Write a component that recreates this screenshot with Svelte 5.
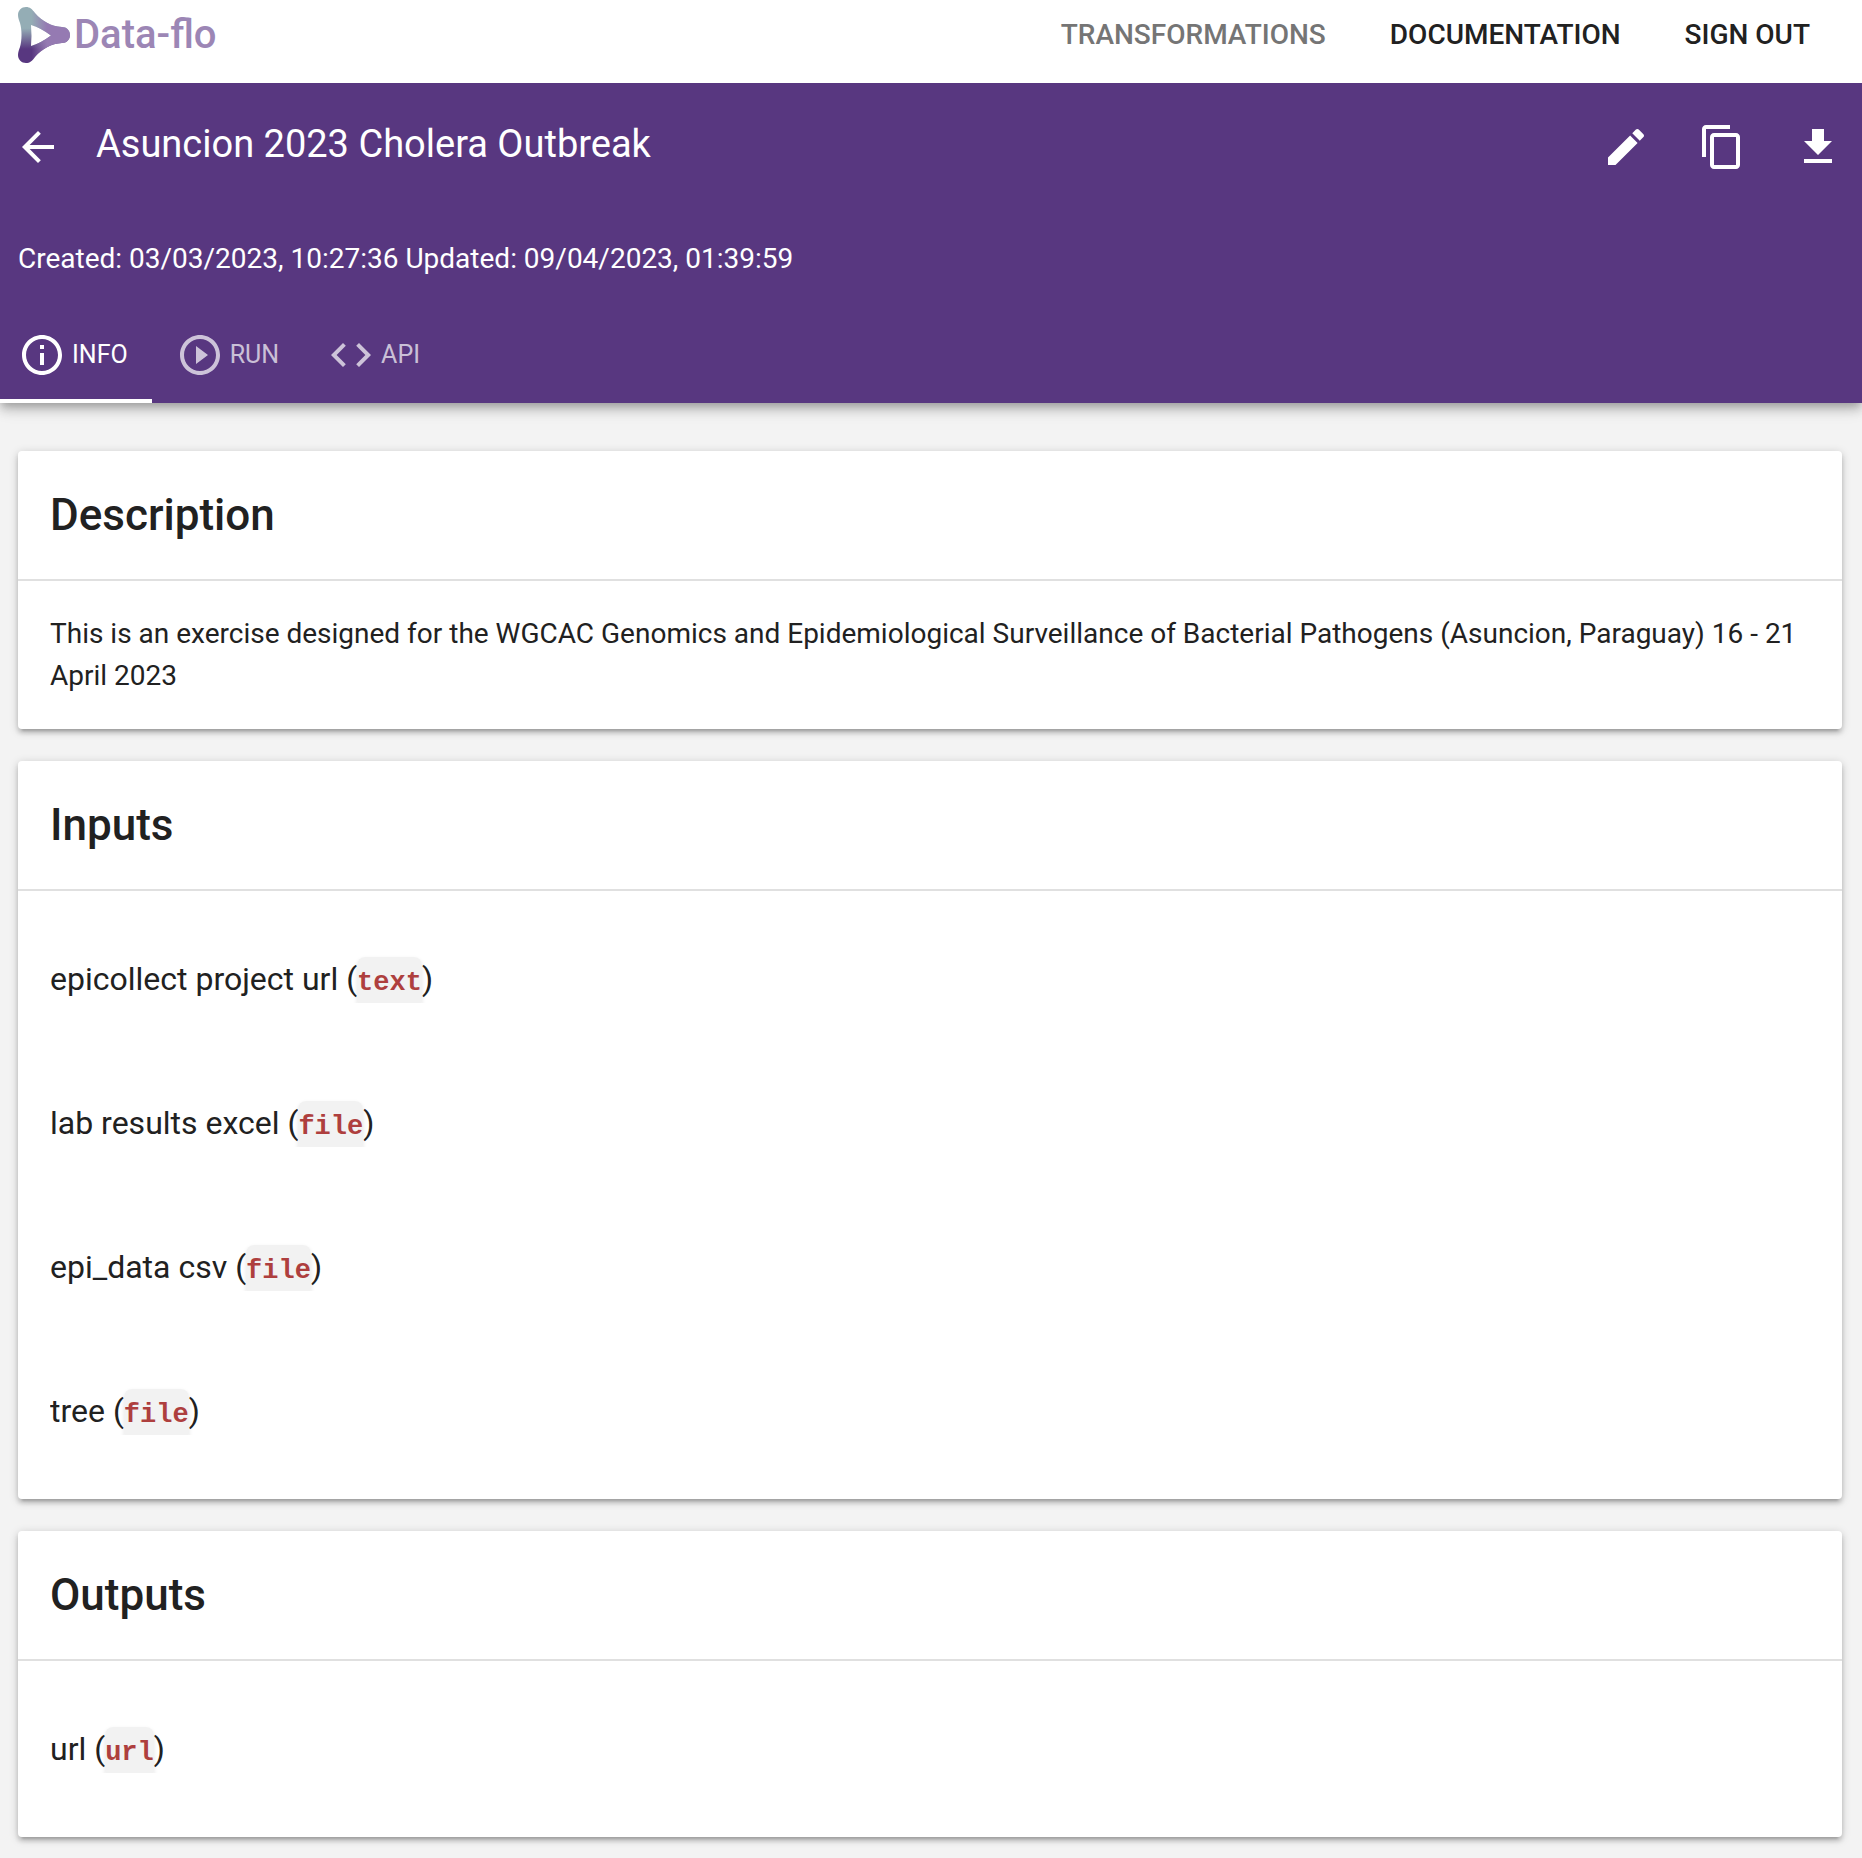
<script>
  const nav = [
    { label: 'Transformations', muted: true },
    { label: 'Documentation', muted: false },
    { label: 'Sign out', muted: false },
  ];

  const actions = [
    {
      label: 'Edit',
      path: 'M20.71 7.04c.39-.39.39-1.02 0-1.41l-2.34-2.34c-.39-.39-1.02-.39-1.41 0l-1.83 1.83 3.75 3.75 1.83-1.83zM3 17.25V21h3.75L17.81 9.94l-3.75-3.75L3 17.25z',
    },
    {
      label: 'Copy',
      path: 'M16 1H4c-1.1 0-2 .9-2 2v14h2V3h12V1zm3 4H8c-1.1 0-2 .9-2 2v14c0 1.1.9 2 2 2h11c1.1 0 2-.9 2-2V7c0-1.1-.9-2-2-2zm0 16H8V7h11v14z',
    },
    { label: 'Download', path: 'M19 9h-4V3H9v6H5l7 7 7-7zM5 18v2h14v-2H5z' },
  ];

  const tabs = [
    {
      label: 'Info',
      path: 'M11 7h2v2h-2zm0 4h2v6h-2zm1-9C6.48 2 2 6.48 2 12s4.48 10 10 10 10-4.48 10-10S17.52 2 12 2zm0 18c-4.41 0-8-3.59-8-8s3.59-8 8-8 8 3.59 8 8-3.59 8-8 8z',
    },
    {
      label: 'Run',
      path: 'M10 16.5l6-4.5-6-4.5v9zM12 2C6.48 2 2 6.48 2 12s4.48 10 10 10 10-4.48 10-10S17.52 2 12 2zm0 18c-4.41 0-8-3.59-8-8s3.59-8 8-8 8 3.59 8 8-3.59 8-8 8z',
    },
    {
      label: 'API',
      path: 'M9.4 16.6L4.8 12l4.6-4.6L8 6l-6 6 6 6 1.4-1.4zm5.2 0l4.6-4.6-4.6-4.6L16 6l6 6-6 6-1.4-1.4z',
    },
  ];
  let active = $state('Info');

  const markPath =
    'M0 8C0 3.5 3.5 0 8 0c4 0 6 2 9 6 7 8 16 13.500 27 14 4.500 0 8 3.500 8 8s-3.500 8-8 8c-11 .5-20 6-27 14-3 4-5 6-9 6-4.500 0-8-3.500-8-8 0-3 1-5 2-8 2-7 2-17 0-24-1-3-2-5-2-8zM13 18q1 11 0 21 10-3 20-10.500Q23 21 13 18z';

  const sections = [
    {
      title: 'Inputs',
      items: [
        { name: 'epicollect project url', type: 'text' },
        { name: 'lab results excel', type: 'file' },
        { name: 'epi_data csv', type: 'file' },
        { name: 'tree', type: 'file' },
      ],
    },
    { title: 'Outputs', items: [{ name: 'url', type: 'url' }] },
  ];
</script>

<header class="topbar">
  <a class="brand" href="/">
    <svg class="mark" viewBox="0 0 52 56" aria-hidden="true">
      <defs>
        <linearGradient id="side" x1="0" y1="0" x2="0" y2="1">
          <stop offset="0.38" stop-color="#94adb5" />
          <stop offset="0.75" stop-color="#583780" />
        </linearGradient>
        <linearGradient id="tip" x1="0" y1="0" x2="1" y2="0">
          <stop offset="0.26" stop-color="#957ab2" stop-opacity="0" />
          <stop offset="0.56" stop-color="#957ab2" />
        </linearGradient>
      </defs>
      <g fill-rule="evenodd">
        <path fill="url(#side)" d={markPath} />
        <path fill="url(#tip)" d={markPath} />
      </g>
    </svg>
    <span>Data-flo</span>
  </a>
  <nav class="links">
    {#each nav as item}
      <a href="#{item.label}" class:muted={item.muted}>{item.label}</a>
    {/each}
  </nav>
</header>

<div class="hero">
  <div class="toolbar">
    <button class="icon" aria-label="Back">
      <svg viewBox="0 0 24 24"><path d="M20 11H7.83l5.59-5.59L12 4l-8 8 8 8 1.41-1.41L7.83 13H20v-2z" /></svg>
    </button>
    <h1>Asuncion 2023 Cholera Outbreak</h1>
    <div class="actions">
      {#each actions as action}
        <button class="icon" aria-label={action.label}>
          <svg viewBox="0 0 24 24"><path d={action.path} /></svg>
        </button>
      {/each}
    </div>
  </div>
  <p class="dates">Created: 03/03/2023, 10:27:36 Updated: 09/04/2023, 01:39:59</p>
  <div class="tabs" role="tablist">
    {#each tabs as tab}
      <button
        class="tab"
        role="tab"
        class:active={active === tab.label}
        aria-selected={active === tab.label}
        onclick={() => (active = tab.label)}
      >
        <svg viewBox="0 0 24 24"><path d={tab.path} /></svg>
        {tab.label}
      </button>
    {/each}
  </div>
</div>

<main>
  <section class="card">
    <h2>Description</h2>
    <p class="text">
      This is an exercise designed for the WGCAC Genomics and Epidemiological Surveillance of Bacterial
      Pathogens (Asuncion, Paraguay) 16 - 21 April 2023
    </p>
  </section>
  {#each sections as section}
    <section class="card">
      <h2>{section.title}</h2>
      <ul>
        {#each section.items as item}
          <li><span class="entry">{item.name} (<code>{item.type}</code>)</span></li>
        {/each}
      </ul>
    </section>
  {/each}
</main>

<style>
  :global(body) {
    background: #f3f3f3;
    color: #212121;
    font-family: Roboto, 'Liberation Sans', sans-serif;
    font-size: 28px;
    line-height: 42px;
  }
  h1, h2, p, ul {
    margin: 0;
    padding: 0;
    font-weight: 500;
  }
  a {
    color: inherit;
    text-decoration: none;
  }
  button {
    padding: 0;
    border: 0;
    background: none;
    color: inherit;
    font: inherit;
    cursor: pointer;
  }
  svg {
    display: block;
    flex: none;
    width: 48px;
    height: 48px;
    fill: currentColor;
  }

  .topbar {
    position: relative;
    z-index: 2;
    display: flex;
    justify-content: space-between;
    height: 69px;
    padding: 0 52px 14px 18px;
    background: #fff;
  }
  .brand {
    display: flex;
    align-items: center;
    gap: 4px;
    color: #9c86b5;
    font-size: 40px;
    font-weight: 500;
  }
  .mark {
    width: 52px;
    height: 56px;
  }
  .links {
    display: flex;
    align-items: center;
    gap: 64px;
    font-weight: 500;
    text-transform: uppercase;
  }
  .muted {
    color: #757575;
  }

  .hero {
    position: relative;
    z-index: 1;
    background: #583780;
    color: #fff;
    box-shadow: 0 4px 8px -2px rgba(0, 0, 0, 0.2), 0 8px 10px rgba(0, 0, 0, 0.14), 0 2px 20px rgba(0, 0, 0, 0.12);
  }
  .toolbar {
    display: flex;
    align-items: center;
    height: 128px;
    padding: 0 20px 0 14px;
  }
  h1 {
    flex: 1;
    padding: 0 0 6px 34px;
    font-size: 38px;
    font-weight: 400;
  }
  .actions {
    display: flex;
    gap: 48px;
  }
  .dates {
    padding: 27px 18px;
    font-weight: 400;
  }
  .tabs {
    display: flex;
  }
  .tab {
    display: flex;
    align-items: center;
    gap: 6px;
    height: 96px;
    padding: 0 24px;
    border-bottom: 4px solid transparent;
    border-top: 4px solid transparent;
    box-sizing: border-box;
    color: rgba(255, 255, 255, 0.7);
    font-size: 25px;
    text-transform: uppercase;
  }
  .tab:first-child {
    padding-left: 18px;
  }
  .tab.active {
    border-bottom-color: #fff;
    color: #fff;
  }

  main {
    display: flex;
    flex-direction: column;
    gap: 32px;
    padding: 48px 20px 21px 18px;
  }
  .card {
    border-radius: 4px;
    background: #fff;
    box-shadow: 0 2px 10px rgba(0, 0, 0, 0.2), 0 4px 4px rgba(0, 0, 0, 0.14), 0 6px 2px -4px rgba(0, 0, 0, 0.12);
  }
  h2 {
    padding: 32px;
    border-bottom: 2px solid #e0e0e0;
    font-size: 44px;
    line-height: 64px;
  }
  .text {
    padding: 32px;
    font-weight: 400;
  }
  ul {
    padding: 16px 32px;
    list-style: none;
    font-size: 32px;
    font-weight: 400;
    line-height: 48px;
  }
  li {
    display: flex;
    align-items: center;
    height: 144px;
  }
  .entry {
    overflow: hidden;
  }
  code {
    padding: 11px 0;
    border-radius: 8px;
    background: #f2f2f2;
    box-shadow: 0 2px 4px rgba(0, 0, 0, 0.1);
    color: #ae3f3e;
    font: bold 27px 'Liberation Mono', monospace;
  }
</style>
